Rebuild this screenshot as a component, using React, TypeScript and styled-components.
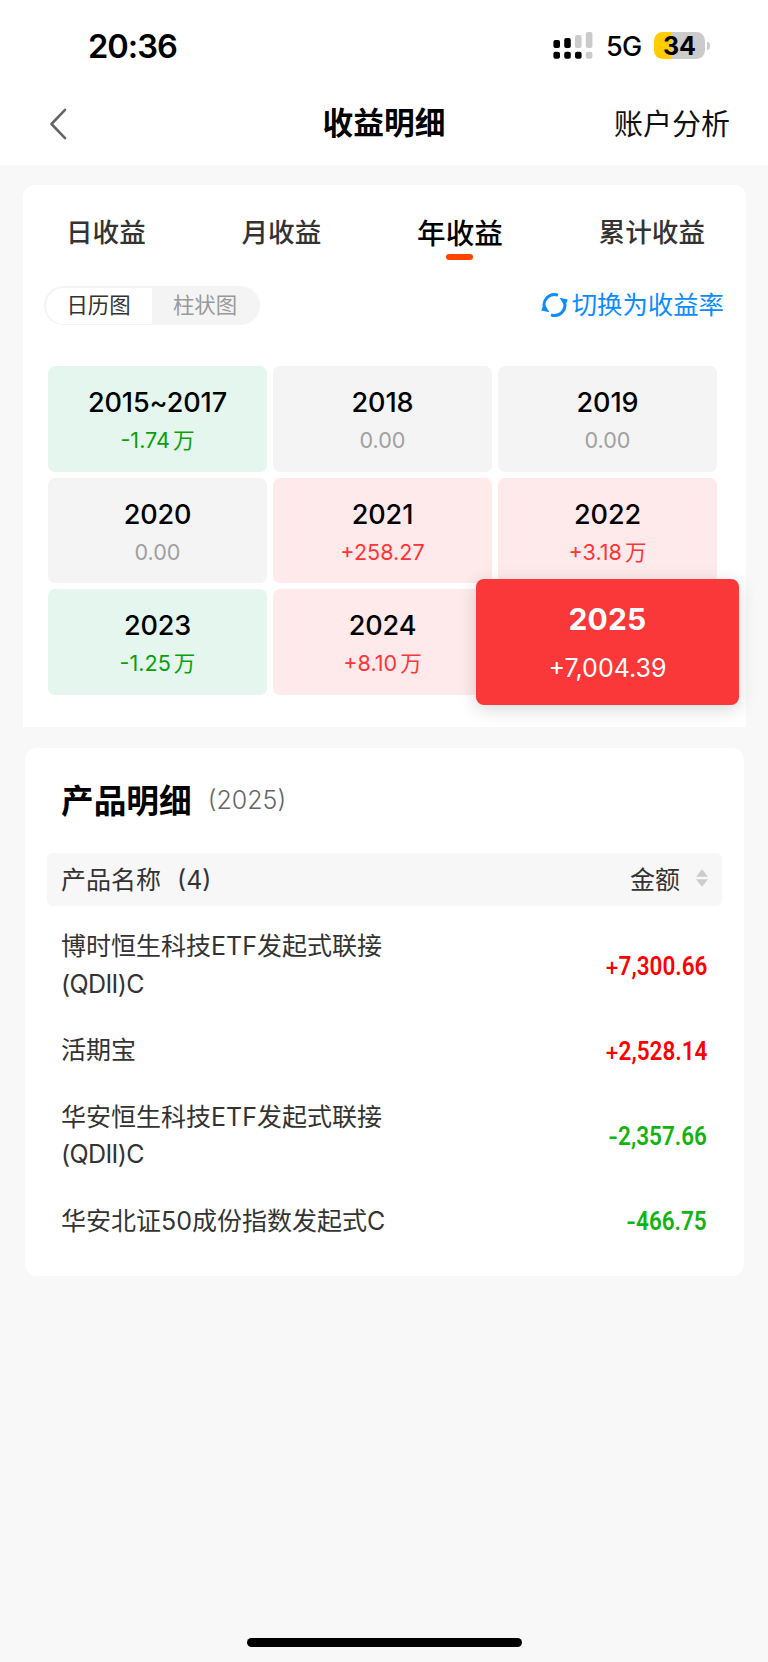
import React from "react";
import styled, { createGlobalStyle, css } from "styled-components";

const GlobalStyle = createGlobalStyle`
  * { box-sizing: border-box; }
  body {
    margin: 0;
    background: #f8f8f8;
    font-family: Inter, "Noto Sans CJK SC", sans-serif;
    color: #333;
  }
`;

const Screen = styled.div`
  width: 768px;
  height: 1662px;
  display: flex;
  flex-direction: column;
  background: #f8f8f8;
  overflow: hidden;
`;

const Top = styled.header`
  height: 165px;
  background: #fff;
`;

const StatusBar = styled.div`
  height: 92px;
  display: flex;
  justify-content: space-between;
  padding: 0 58px 0 88px;
`;

const Clock = styled.div`
  font-size: 32.6px;
  line-height: 40px;
  margin-top: 26px;
  font-weight: 600;
  letter-spacing: -1px;
  color: #000;
`;

const StatusIcons = styled.div`
  display: flex;
  align-items: flex-start;
  padding-top: 32px;
`;

const Network = styled.span`
  font-size: 27px;
  line-height: 28px;
  font-weight: 500;
  margin: 1px 13px 0 13px;
  width: 35px;
  letter-spacing: -0.8px;
  color: #000;
`;

const Battery = styled.div`
  width: 51px;
  height: 27px;
  border-radius: 8.5px;
  background: linear-gradient(90deg, #ffcc00 17px, #cbcbcb 17px);
  color: #000;
  font-size: 25px;
  font-weight: 700;
  line-height: 28px;
  text-align: center;
`;

const BatteryCap = styled.div`
  width: 3px;
  height: 8px;
  margin: 10px 0 0 2px;
  border-radius: 0 4px 4px 0;
  background: #cbcbcb;
`;

const NavBar = styled.div`
  height: 62px;
  display: grid;
  grid-template-columns: 1fr auto 1fr;
  align-items: center;
  padding: 0 38px;
`;

const NavTitle = styled.h1`
  margin: 0;
  font-size: 30.7px;
  line-height: 44px;
  font-weight: 600;
  color: #000;
`;

const NavAction = styled.a`
  justify-self: end;
  font-size: 29px;
  line-height: 44px;
  margin-top: 4px;
  color: #111;
`;

const EarningsCard = styled.section`
  margin: 20px 22px 0 23px;
  height: 542px;
  background: #fff;
  border-radius: 12px 12px 0 0;
`;

const Tabs = styled.nav`
  display: flex;
  justify-content: space-between;
  padding: 27px 41px 0 43px;
  height: 77px;
`;

const Tab = styled.div<{ $active?: boolean }>`
  display: flex;
  flex-direction: column;
  align-items: center;
  font-size: ${(p) => (p.$active ? 28.6 : 26.6)}px;
  line-height: ${(p) => (p.$active ? 44 : 40)}px;
  font-weight: 500;
  color: ${(p) => (p.$active ? "#000" : "#333")};
`;

const TabMark = styled.span`
  width: 27px;
  height: 6px;
  margin-top: -2px;
  border-radius: 3px;
  background: #ff4400;
`;

const Controls = styled.div`
  display: flex;
  justify-content: space-between;
  align-items: center;
  height: 39px;
  margin-top: 24px;
  padding: 0 22px 0 21px;
`;

const Segmented = styled.div`
  display: flex;
  width: 216px;
  height: 39px;
  padding: 1.5px;
  border-radius: 20px;
  background: #f4f4f4;
`;

const Segment = styled.div<{ $active?: boolean }>`
  flex: ${(p) => (p.$active ? "0 0 106px" : "1")};
  border-radius: 18px 0 0 18px;
  background: ${(p) => (p.$active ? "#fff" : "transparent")};
  color: ${(p) => (p.$active ? "#333" : "#999")};
  font-size: 21.4px;
  line-height: 35px;
  text-align: center;
`;

const SwitchLink = styled.a`
  display: flex;
  align-items: center;
  gap: 4px;
  margin-top: -2px;
  font-size: 25.4px;
  line-height: 36px;
  color: #0b8cff;
`;

const YearGrid = styled.div`
  display: grid;
  grid-template-columns: repeat(3, 219px);
  grid-auto-rows: 105.6px;
  gap: 5.8px 6px;
  margin: 41.4px 0 0 25px;
`;

type Tone = "gain" | "loss" | "flat";

const toneBg = { gain: "#feeaeb", loss: "#e5f6ee", flat: "#f4f4f4" };
const toneText = { gain: "#ff3436", loss: "#0a9e0a", flat: "#a0a0a0" };

const YearCell = styled.div<{ $tone: Tone; $selected?: boolean }>`
  display: flex;
  flex-direction: column;
  align-items: center;
  padding-top: 19px;
  border-radius: 7px;
  background: ${(p) => toneBg[p.$tone]};
  color: ${(p) => toneText[p.$tone]};
  ${(p) =>
    p.$selected &&
    css`
      position: relative;
      z-index: 1;
      margin: -10.5px -21.8px;
      padding-top: 22px;
      border-radius: 8px;
      background: #fa3739;
      color: #fff;
      box-shadow: 0 4px 18px rgba(0, 0, 0, 0.16);
    `}
`;

const YearName = styled.div<{ $selected?: boolean }>`
  font-size: ${(p) => (p.$selected ? 30 : 27)}px;
  line-height: 36px;
  font-weight: ${(p) => (p.$selected ? 700 : 500)};
  letter-spacing: ${(p) => (p.$selected ? 0.2 : -0.1)}px;
  color: ${(p) => (p.$selected ? "#fff" : "#000")};
`;

const YearValue = styled.div<{ $selected?: boolean }>`
  font-size: ${(p) => (p.$selected ? 25 : 21.6)}px;
  line-height: 30px;
  margin-top: ${(p) => (p.$selected ? 16 : 4)}px;
  display: flex;
  gap: 3px;
`;

const ProductCard = styled.section`
  margin: 21px 24px 0 25px;
  height: 528px;
  padding: 0 22px;
  background: #fff;
  border-radius: 12px;
`;

const ProductTitle = styled.h2`
  display: flex;
  align-items: center;
  gap: 16px;
  margin: 0;
  padding: 0 0 4px 14px;
  height: 104.5px;
  font-size: 32.7px;
  font-weight: 700;
  color: #000;
`;

const ProductYear = styled.span`
  margin-top: 4px;
  font-size: 25px;
  font-weight: 350;
  color: #666;
`;

const TableHead = styled.div`
  display: flex;
  align-items: center;
  justify-content: space-between;
  height: 53.5px;
  padding: 0 14px 2px 14px;
  border-radius: 6px;
  background: #f7f7f7;
  font-size: 25px;
`;

const HeadName = styled.span`
  display: flex;
  align-items: baseline;
  gap: 16px;
`;

const HeadAmount = styled.span`
  display: flex;
  align-items: center;
  gap: 16px;
`;

const Rows = styled.div`
  padding: 7.6px 15px 0 14px;
`;

const Row = styled.div`
  display: flex;
  justify-content: space-between;
  align-items: center;
  padding: 14.5px 0;
`;

const ProductName = styled.div`
  width: 330px;
  font-size: 25px;
  line-height: 37.5px;
`;

const ShareClass = styled.span`
  display: block;
  letter-spacing: -0.6px;
`;

const Amount = styled.div<{ $gain: boolean }>`
  display: flex;
  align-items: center;
  margin-top: 2px;
  font-family: Roboto, sans-serif;
  font-size: 25px;
  line-height: 30px;
  font-weight: 600;
  transform: scaleX(0.9);
  transform-origin: right center;
  color: ${(p) => (p.$gain ? "#ff0000" : "#12b312")};
`;

const Sign = styled.span<{ $gain: boolean }>`
  margin-top: -1px;
  margin-right: ${(p) => (p.$gain ? -1 : 0)}px;
  font-family: Inter, sans-serif;
  font-size: ${(p) => (p.$gain ? 25 : 24)}px;
  font-weight: ${(p) => (p.$gain ? 500 : 600)};
`;

const HomeIndicator = styled.div`
  width: 275px;
  height: 9px;
  margin: auto auto 15px 247px;
  border-radius: 5px;
  background: #000;
`;

const SignalIcon = () => {
  const bars = [
    { top: 8, off: false },
    { top: 6, off: false },
    { top: 3, off: true },
    { top: 0, off: true },
  ];
  return (
    <svg width="40" height="27" viewBox="0 0 40 27">
      {bars.map((b, i) => (
        <g key={i}>
          <rect x={i * 10.8 + 0.4} y={b.top} width="6.6" height={16 - b.top} rx="2" fill={b.off ? "#cbcbcb" : "#000"} />
          <rect x={i * 10.8 + 0.4} y="19.8" width="6.6" height="7" rx="2" fill={i === 3 ? "#cbcbcb" : "#000"} />
        </g>
      ))}
    </svg>
  );
};

const BackButton = styled.span`
  display: flex;
  margin: 2px 0 0 10px;
`;

const BackIcon = () => (
  <svg width="20" height="34" viewBox="0 0 20 34" fill="none">
    <path d="M17 2.8 L3.5 17 L17 31.2" stroke="#666" strokeWidth="2.6" strokeLinecap="round" strokeLinejoin="round" />
  </svg>
);

const SwapIcon = () => (
  <svg width="27" height="26" viewBox="0 0 27 26" fill="none">
    <path d="M4 17 A10.3 10.3 0 0 1 17 3.2" stroke="#0b8cff" strokeWidth="3" />
    <path d="M23 9 A10.3 10.3 0 0 1 10 22.8" stroke="#0b8cff" strokeWidth="3" />
    <path d="M0.2 18.4 L3.2 11.5 L8.4 20.2 Z" fill="#0b8cff" />
    <path d="M26.8 7.6 L23.8 14.5 L18.6 5.8 Z" fill="#0b8cff" />
  </svg>
);

const SortIcon = () => (
  <svg width="12" height="18" viewBox="0 0 12 18" fill="#ccc">
    <path d="M6 0.3 L12 7.7 H0 Z" />
    <path d="M6 17.7 L12 10.3 H0 Z" />
  </svg>
);

const years: { name: string; value: string; unit?: string; tone: Tone; selected?: boolean }[] = [
  { name: "2015~2017", value: "-1.74", unit: "万", tone: "loss" },
  { name: "2018", value: "0.00", tone: "flat" },
  { name: "2019", value: "0.00", tone: "flat" },
  { name: "2020", value: "0.00", tone: "flat" },
  { name: "2021", value: "+258.27", tone: "gain" },
  { name: "2022", value: "+3.18", unit: "万", tone: "gain" },
  { name: "2023", value: "-1.25", unit: "万", tone: "loss" },
  { name: "2024", value: "+8.10", unit: "万", tone: "gain" },
  { name: "2025", value: "+7,004.39", tone: "gain", selected: true },
];

const products: { name: string; share?: string; amount: string }[] = [
  { name: "博时恒生科技ETF发起式联接", share: "(QDII)C", amount: "+7,300.66" },
  { name: "活期宝", amount: "+2,528.14" },
  { name: "华安恒生科技ETF发起式联接", share: "(QDII)C", amount: "-2,357.66" },
  { name: "华安北证50成份指数发起式C", amount: "-466.75" },
];

const tabs = ["日收益", "月收益", "年收益", "累计收益"];

export default function App() {
  return (
    <Screen>
      <GlobalStyle />
      <Top>
        <StatusBar>
          <Clock>20:36</Clock>
          <StatusIcons>
            <SignalIcon />
            <Network>5G</Network>
            <Battery>34</Battery>
            <BatteryCap />
          </StatusIcons>
        </StatusBar>
        <NavBar>
          <BackButton>
            <BackIcon />
          </BackButton>
          <NavTitle>收益明细</NavTitle>
          <NavAction>账户分析</NavAction>
        </NavBar>
      </Top>

      <EarningsCard>
        <Tabs>
          {tabs.map((t) => (
            <Tab key={t} $active={t === "年收益"}>
              {t}
              {t === "年收益" && <TabMark />}
            </Tab>
          ))}
        </Tabs>
        <Controls>
          <Segmented>
            <Segment $active>日历图</Segment>
            <Segment>柱状图</Segment>
          </Segmented>
          <SwitchLink>
            <SwapIcon />
            切换为收益率
          </SwitchLink>
        </Controls>
        <YearGrid>
          {years.map((y) => (
            <YearCell key={y.name} $tone={y.tone} $selected={y.selected}>
              <YearName $selected={y.selected}>{y.name}</YearName>
              <YearValue $selected={y.selected}>
                <span>{y.value}</span>
                {y.unit && <span>{y.unit}</span>}
              </YearValue>
            </YearCell>
          ))}
        </YearGrid>
      </EarningsCard>

      <ProductCard>
        <ProductTitle>
          产品明细
          <ProductYear>(2025)</ProductYear>
        </ProductTitle>
        <TableHead>
          <HeadName>
            产品名称<span>(4)</span>
          </HeadName>
          <HeadAmount>
            金额
            <SortIcon />
          </HeadAmount>
        </TableHead>
        <Rows>
          {products.map((p) => {
            const gain = p.amount.startsWith("+");
            return (
              <Row key={p.name}>
                <ProductName>
                  {p.name}
                  {p.share && <ShareClass>{p.share}</ShareClass>}
                </ProductName>
                <Amount $gain={gain}>
                  <Sign $gain={gain}>{p.amount[0]}</Sign>
                  {p.amount.slice(1)}
                </Amount>
              </Row>
            );
          })}
        </Rows>
      </ProductCard>

      <HomeIndicator />
    </Screen>
  );
}
